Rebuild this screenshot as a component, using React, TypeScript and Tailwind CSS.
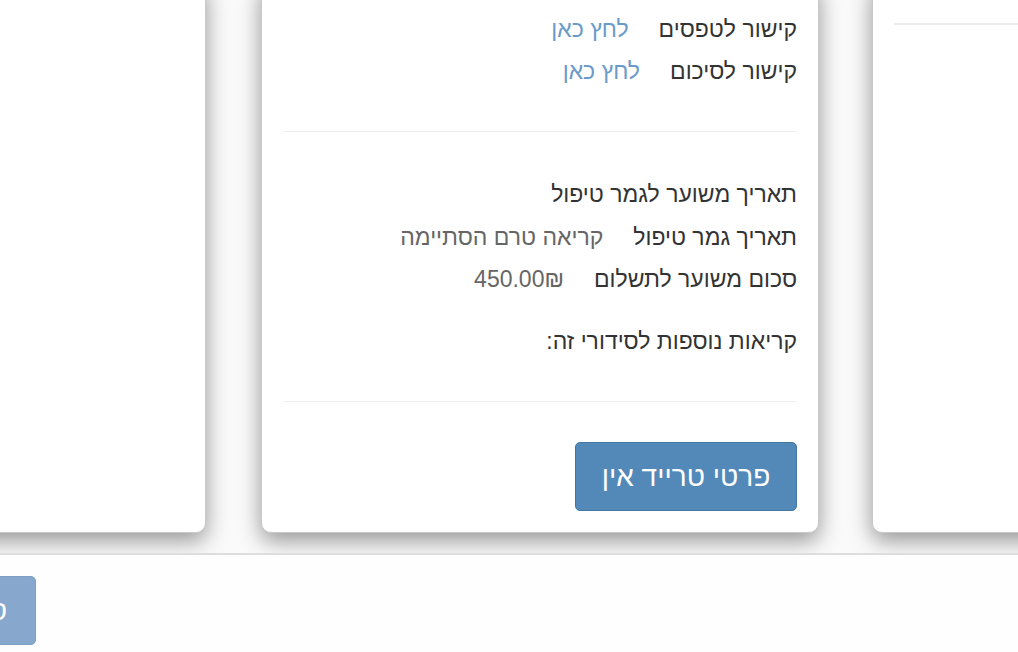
import type { ReactNode } from 'react'

const font = { fontFamily: '"Liberation Sans", "Open Sans", "DejaVu Sans", sans-serif' }

function InfoRow({ label, children, className = '' }: { label: string; children?: ReactNode; className?: string }) {
  return (
    <div className={`flex items-center gap-[30px] leading-[42px] ${className}`}>
      <span className="text-[#333]">{label}</span>
      {children}
    </div>
  )
}

function Card({ children, className = '' }: { children?: ReactNode; className?: string }) {
  return (
    <div
      className={`h-[553px] w-[558px] shrink-0 rounded-[10px] border border-[#c9c9c9] bg-white shadow-[0_8px_22px_rgba(0,0,0,0.4)] ${className}`}
    >
      {children}
    </div>
  )
}

export default function App() {
  return (
    <div className="min-h-[652px] w-[1018px] overflow-hidden bg-[#fefefe]" style={font}>
      <div className="h-[553px] overflow-hidden bg-[#fafafa]">
        <div className="-mt-[20px] flex items-start" dir="ltr">
          <Card className="-ml-[352px]" />

          <Card className="ml-[55px] px-[21px] pt-[27px]">
            <div dir="rtl" className="text-[23px]">
              <InfoRow label="קישור לטפסים">
                <a className="text-[#6a9bc9]">לחץ כאן</a>
              </InfoRow>
              <InfoRow label="קישור לסיכום">
                <a className="text-[#6a9bc9]">לחץ כאן</a>
              </InfoRow>

              <hr className="mt-[39px] border-t border-[#eeeeee]" />

              <InfoRow label="תאריך משוער לגמר טיפול" className="mt-[41px]" />
              <InfoRow label="תאריך גמר טיפול" className="mt-[1px]">
                <span className="text-[#666]">קריאה טרם הסתיימה</span>
              </InfoRow>
              <InfoRow label="סכום משוער לתשלום">
                <span className="text-[#666]">450.00₪</span>
              </InfoRow>
              <InfoRow label="קריאות נוספות לסידורי זה:" className="mt-[20px]" />

              <hr className="mt-[39px] border-t border-[#eeeeee]" />

              <div className="mt-[40px] flex">
                <button className="h-[69px] w-[222px] rounded-[5px] border border-[#44769f] bg-[#5289b9] text-[28px] text-white">
                  פרטי טרייד אין
                </button>
              </div>
            </div>
          </Card>

          <Card className="ml-[53px] px-[21px] pt-[42px]">
            <hr className="border-t-2 border-[#ececec]" />
          </Card>
        </div>
      </div>

      <div className="border-t-2 border-[#dddddd] pt-[21px]" dir="ltr">
        <div className="flex w-[36px] justify-end">
          <button
            dir="rtl"
            className="h-[69px] shrink-0 rounded-[5px] border border-[#7f9ec4] bg-[#87a7cc] pl-[30px] pr-[28px] text-[28px] text-white"
          >
            סגור
          </button>
        </div>
      </div>
    </div>
  )
}
